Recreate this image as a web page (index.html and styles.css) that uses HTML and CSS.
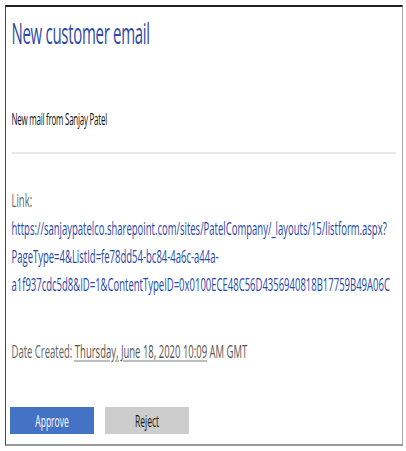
FILE: index.html
```html
<!doctype html>
<html lang="en">

<head>
  <meta charset="utf-8">
  <title>New customer email</title>
  <meta name="viewport" content="width=device-width, initial-scale=1">
  <link rel="stylesheet" href="styles.css">
</head>

<body>
  <div class="card">
    <div class="sheet">
      <h1 class="title">New customer email</h1>

      <p class="summary">New mail from Sanjay Patel</p>

      <hr class="divider">

      <p class="field">
        <span class="label">Link:</span><br>
        <a class="link" href="#">https://sanjaypatelco.sharepoint.com/sites/PatelCompany/_layouts/15/listform.aspx?<br>PageType=4&amp;ListId=fe78dd54-bc84-4a6c-a44a-<br>a1f937cdc5d8&amp;ID=1&amp;ContentTypeID=0x0100ECE48C56D4356940818B17759B49A06C</a>
      </p>

      <p class="field date">
        <span class="label">Date Created:</span> <span class="stamp">Thursday, June 18, 2020 10:09</span> AM GMT
      </p>

      <div class="actions">
        <button class="btn btn-approve">Approve</button>
        <button class="btn btn-reject">Reject</button>
      </div>
    </div>
  </div>
</body>

</html>
```

FILE: styles.css
```css
body {
  background: #fff;
  margin: 5px 0 0 5px;
  font-family: "Open Sans", "Noto Sans", sans-serif;
}

.card {
  box-sizing: border-box;
  width: 398px;
  height: 441px;
  border-top: 2px solid #222;
  border-left: 1px solid #444;
  border-right: 1px solid #a8a8a8;
  border-bottom: 2px solid #9a9a9a;
  overflow: hidden;
}

/* the whole mail body is rendered narrow, like the captured card */
.sheet {
  width: 792px;
  box-sizing: border-box;
  padding: 6px 12px 0 11px;
  transform: scaleX(0.5);
  transform-origin: 0 0;
}

.title {
  color: #3049a8;
  font-weight: 400;
  font-size: 30px;
  letter-spacing: -0.6px;
  line-height: 40px;
  margin: 0 0 55px 0;
}

.summary {
  color: #111;
  font-size: 16px;
  letter-spacing: -0.5px;
  line-height: 22px;
  margin: 0 0 22px 0;
}

.divider {
  border: 0;
  height: 2px;
  background: #e8e8e8;
  margin: 0 0 32px 0;
}

.field {
  color: #333;
  font-size: 19px;
  line-height: 28px;
  margin: 0;
}

.label {
  color: #666;
}

.link {
  color: #2a48a8;
  text-decoration: none;
}

.date {
  margin-top: 39px;
  color: #555;
}

.stamp {
  text-decoration: underline dotted #777;
  text-underline-offset: 3px;
}

.actions {
  display: flex;
  gap: 22px;
  margin: 42px 0 0 -3px;
}

.btn {
  width: 168px;
  height: 27px;
  border: 0;
  font-family: inherit;
  font-size: 17px;
  padding: 0;
}

.btn-approve {
  background: #4472c4;
  color: #fff;
}

.btn-reject {
  background: #cdcdcd;
  color: #111;
}
```
